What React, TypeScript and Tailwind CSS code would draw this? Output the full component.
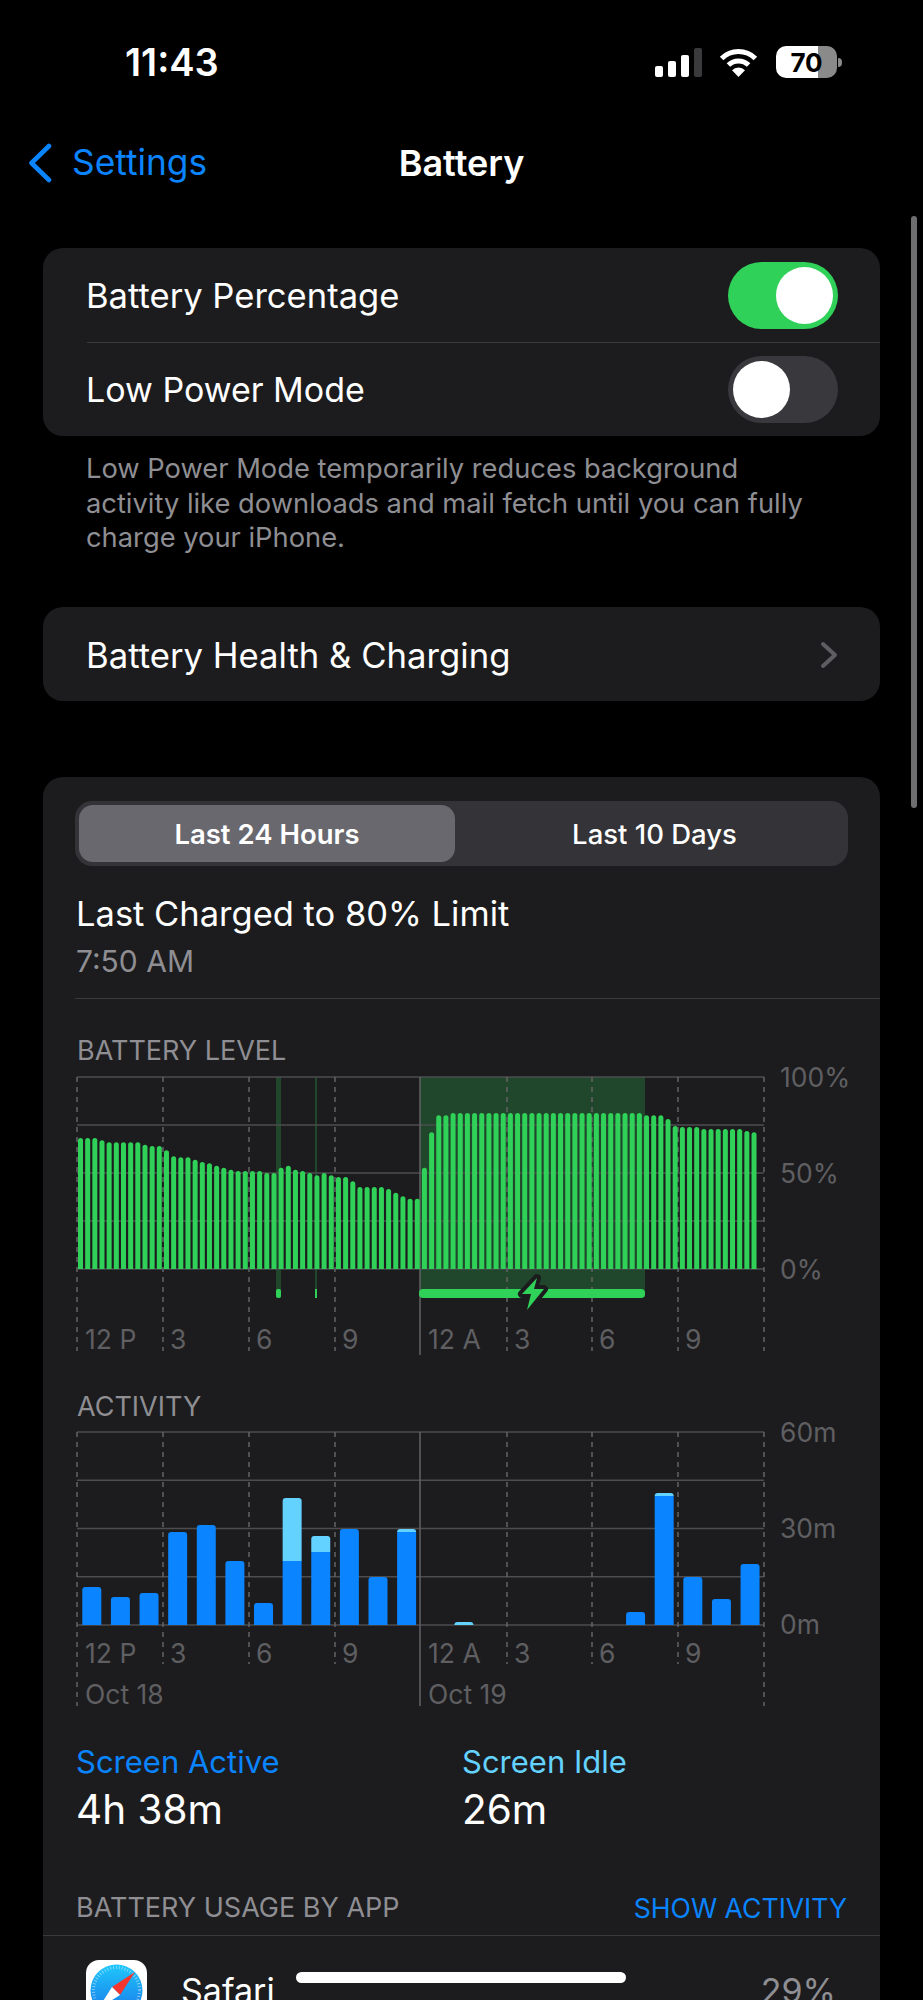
import React from "react";

const GREEN = "#30d158";
const BLUE = "#0a84ff";
const CYAN = "#64d2ff";

// x positions of the 3-hour lines, relative to the card's left edge
const HOUR_X = [34, 120, 206, 292, 377, 464, 549, 635, 721];
const MIDNIGHT_X = 377;
const HOUR_LABELS: [string, number][] = [
  ["12 P", 42],
  ["3", 127],
  ["6", 213],
  ["9", 299],
  ["12 A", 385],
  ["3", 471],
  ["6", 556],
  ["9", 642],
];

// battery bar heights in px, sampled every 15 minutes
const BATTERY_TOPS = [
  325, 325, 325, 332, 338, 338, 338, 338, 338, 345, 349, 349,
  362, 380, 383, 383, 390, 397, 401, 408, 414, 420, 424, 424,
  424, 424, 430, 430, 414, 408, 420, 424, 430, 437, 430, 437,
  442, 442, 455, 472, 472, 472, 472, 478, 489, 500, 507, 507,
  414, 308, 257, 257,
  ...Array(27).fill(250),
  257, 257, 257, 268, 289, 292, 292, 292, 298, 298, 298, 298, 298, 298, 304, 308,
];
const batteryLevels: number[] = BATTERY_TOPS.map((t) => (718 - t) / 3);

interface ActivityBar {
  hour: number;
  active: number;
  idle: number;
}

const activity: ActivityBar[] = [
  { hour: 0, active: 38, idle: 0 },
  { hour: 1, active: 28, idle: 0 },
  { hour: 2, active: 32, idle: 0 },
  { hour: 3, active: 93, idle: 0 },
  { hour: 4, active: 100, idle: 0 },
  { hour: 5, active: 64, idle: 0 },
  { hour: 6, active: 22, idle: 0 },
  { hour: 7, active: 64, idle: 63 },
  { hour: 8, active: 73, idle: 16 },
  { hour: 9, active: 96, idle: 0 },
  { hour: 10, active: 48, idle: 0 },
  { hour: 11, active: 93, idle: 3 },
  { hour: 13, active: 0, idle: 3 },
  { hour: 19, active: 13, idle: 0 },
  { hour: 20, active: 129, idle: 3 },
  { hour: 21, active: 48, idle: 0 },
  { hour: 22, active: 26, idle: 0 },
  { hour: 23, active: 61, idle: 0 },
];

function topRounded(x: number, y: number, w: number, h: number, r: number) {
  const rr = Math.min(r, h);
  return `M${x} ${y + h}V${y + rr}Q${x} ${y} ${x + rr} ${y}H${x + w - rr}Q${x + w} ${y} ${x + w} ${y + rr}V${y + h}Z`;
}

function Toggle({ on }: { on: boolean }) {
  return (
    <div className={`flex h-[67px] w-[110px] items-center rounded-full p-[5px] ${on ? "justify-end bg-[#30d158]" : "justify-start bg-[#39393d]"}`}>
      <div className="size-[57px] rounded-full bg-white" />
    </div>
  );
}

function StatusBar() {
  return (
    <div className="flex h-[124px] items-center justify-between pl-[125px] pr-[81px]">
      <span className="text-[38px] font-semibold text-white">11:43</span>
      <div className="flex items-center">
        <div className="flex h-[29px] items-end gap-[5px]">
          <div className="h-[11px] w-[8px] rounded-[2px] bg-white" />
          <div className="h-[16px] w-[8px] rounded-[2px] bg-white" />
          <div className="h-[22px] w-[8px] rounded-[2px] bg-white" />
          <div className="h-[29px] w-[8px] rounded-[2px] bg-[#3a3a3c]" />
        </div>
        <svg width="39" height="29" viewBox="0 0 39 29" className="ml-[17px]">
          <path d="M2.6 10.5A24 24 0 0 1 36.4 10.5" fill="none" stroke="#fff" strokeWidth="5" />
          <path d="M9.4 17A14.5 14.5 0 0 1 29.6 17" fill="none" stroke="#fff" strokeWidth="5" />
          <path d="M19.5 29L13 22.3A9 9 0 0 1 26 22.3Z" fill="#fff" />
        </svg>
        <div className="ml-[18px] flex h-[32px] w-[61px] items-center justify-center rounded-[10px] bg-[linear-gradient(90deg,#fff_69%,#8a8a8a_69%)] text-[26px] font-bold text-black">
          70
        </div>
        <div className="ml-[1px] h-[9px] w-[4px] rounded-r-full bg-[#8a8a8a]" />
      </div>
    </div>
  );
}

function NavBar() {
  return (
    <div className="relative flex h-[78px] items-center pl-[28px]">
      <svg width="24" height="40" viewBox="0 0 24 40">
        <path d="M21 3L3.5 20L21 37" fill="none" stroke={BLUE} strokeWidth="4.6" strokeLinecap="round" strokeLinejoin="round" />
      </svg>
      <span className="ml-[20px] text-[35.3px] text-[#0a84ff]">Settings</span>
      <span className="absolute left-0 right-0 text-center text-[36px] font-semibold text-white">Battery</span>
    </div>
  );
}

function BatteryChart() {
  const top = 10;
  const base = 202;
  return (
    <svg width="837" height="300" className="block overflow-visible">
      <rect x={MIDNIGHT_X} y={top} width="225" height="220" fill="#20472b" />
      <rect x="233" y={top} width="5" height="220" fill="#20472b" />
      <rect x="272" y={top} width="2" height="220" fill="#20472b" />
      {[0, 1, 2, 3, 4].map((i) => (
        <line key={i} x1="34" x2="721" y1={top + i * 48} y2={top + i * 48} stroke="#4d4d50" strokeWidth="1.5" />
      ))}
      {HOUR_X.map((x) =>
        x === MIDNIGHT_X ? (
          <line key={x} x1={x} x2={x} y1={top} y2="288" stroke="#626265" strokeWidth="1.5" />
        ) : (
          <line key={x} x1={x} x2={x} y1={top} y2="284" stroke="#636366" strokeWidth="1.5" strokeDasharray="5 5" />
        ),
      )}
      {batteryLevels.map((h, i) => (
        <path key={i} d={topRounded(35 + i * 7.165, base - h, 5, h, 2.5)} fill={GREEN} />
      ))}
      <rect x="233" y="222" width="5" height="9" rx="2" fill={GREEN} />
      <rect x="272" y="222" width="2" height="9" fill={GREEN} />
      <rect x="376" y="222" width="226" height="9" rx="4" fill={GREEN} />
      <path d="M494 211L479 227H488L484 243L501 222H491Z" fill={GREEN} stroke="#1c1c1e" strokeWidth="8" strokeLinejoin="round" paintOrder="stroke" />
      {HOUR_LABELS.map(([label, x]) => (
        <text key={x} x={x} y="282" fontSize="26.5" fill="#5f5f62">{label}</text>
      ))}
      <text x="737" y="20" fontSize="26.5" fill="#5f5f62">100%</text>
      <text x="737" y="116" fontSize="26.5" fill="#5f5f62">50%</text>
      <text x="737" y="212" fontSize="26.5" fill="#5f5f62">0%</text>
    </svg>
  );
}

function ActivityChart() {
  const top = 10;
  const base = 203;
  return (
    <svg width="837" height="290" className="block overflow-visible">
      {[0, 1, 2, 3, 4].map((i) => (
        <line key={i} x1="34" x2="721" y1={top + i * 48.25} y2={top + i * 48.25} stroke="#4d4d50" strokeWidth="1.5" />
      ))}
      {HOUR_X.map((x) => {
        if (x === MIDNIGHT_X) return <line key={x} x1={x} x2={x} y1={top} y2="284" stroke="#626265" strokeWidth="1.5" />;
        const long = x === 34 || x === 721;
        return <line key={x} x1={x} x2={x} y1={top} y2={long ? 284 : 242} stroke="#636366" strokeWidth="1.5" strokeDasharray="5 5" />;
      })}
      {activity.map((b) => {
        const x = 39.3 + b.hour * 28.62;
        return (
          <g key={b.hour}>
            {b.idle > 0 && <path d={topRounded(x, base - b.active - b.idle, 19, b.idle, 3)} fill={CYAN} />}
            {b.active > 0 && (
              <path
                d={b.idle > 0 ? `M${x} ${base}V${base - b.active}H${x + 19}V${base}Z` : topRounded(x, base - b.active, 19, b.active, 3)}
                fill={BLUE}
              />
            )}
          </g>
        );
      })}
      {HOUR_LABELS.map(([label, x]) => (
        <text key={x} x={x} y="241" fontSize="26.5" fill="#5f5f62">{label}</text>
      ))}
      <text x="42" y="282" fontSize="26.5" fill="#5f5f62">Oct 18</text>
      <text x="385" y="282" fontSize="26.5" fill="#5f5f62">Oct 19</text>
      <text x="737" y="20" fontSize="26.5" fill="#5f5f62">60m</text>
      <text x="737" y="116" fontSize="26.5" fill="#5f5f62">30m</text>
      <text x="737" y="212" fontSize="26.5" fill="#5f5f62">0m</text>
    </svg>
  );
}

function SafariIcon() {
  return (
    <svg width="61" height="61" viewBox="0 0 61 61" className="shrink-0">
      <defs>
        <linearGradient id="safari" x1="0" y1="0" x2="0" y2="1">
          <stop offset="0" stopColor="#1fc8fb" />
          <stop offset="1" stopColor="#1a74e8" />
        </linearGradient>
      </defs>
      <rect width="61" height="61" rx="13" fill="#fff" />
      <circle cx="30.5" cy="30.5" r="26" fill="url(#safari)" />
      <circle cx="30.5" cy="30.5" r="23" fill="none" stroke="#fff" strokeOpacity="0.6" strokeWidth="3" strokeDasharray="0.7 2.2" />
      <path d="M49 12L26 27L34 35Z" fill="#f5352e" />
      <path d="M12 49L26 27L34 35Z" fill="#fff" />
    </svg>
  );
}

export default function App() {
  return (
    <div className="relative h-[2000px] w-[923px] overflow-hidden bg-black [font-family:Inter,sans-serif]">
      <StatusBar />
      <NavBar />

      <div className="mx-[43px] mt-[46px] rounded-[20px] bg-[#1c1c1e]">
        <div className="flex h-[94px] items-center justify-between pl-[43px] pr-[42px] pt-[1px]">
          <span className="text-[34.6px] text-white">Battery Percentage</span>
          <Toggle on />
        </div>
        <div className="ml-[44px] h-px bg-[#3a3a3c]" />
        <div className="flex h-[93px] items-center justify-between pl-[43px] pr-[42px]">
          <span className="text-[34px] text-white">Low Power Mode</span>
          <Toggle on={false} />
        </div>
      </div>

      <p className="ml-[86px] mt-[16px] w-[735px] text-[27.3px] leading-[34.5px] text-[#8e8e93]">
        Low Power Mode temporarily reduces background activity like downloads and mail fetch until you can fully charge your iPhone.
      </p>

      <div className="mx-[43px] mt-[51px] flex h-[94px] items-center justify-between rounded-[20px] bg-[#1c1c1e] pl-[43px] pr-[42px] pt-[3px]">
        <span className="text-[34.7px] text-white">Battery Health &amp; Charging</span>
        <svg width="18" height="28" viewBox="0 0 18 28">
          <path d="M3 3L15 14L3 25" fill="none" stroke="#5e5e62" strokeWidth="4" strokeLinecap="round" strokeLinejoin="round" />
        </svg>
      </div>

      <div className="mx-[43px] mt-[76px] rounded-[20px] bg-[#1c1c1e] pt-[24px]">
        <div className="mx-[32px] flex h-[65px] rounded-[17px] bg-[#333338] p-[4px]">
          <div className="flex w-[376px] items-center justify-center rounded-[14px] bg-[#68686e] pt-[3px] text-[27.5px] font-semibold text-white">Last 24 Hours</div>
          <div className="flex flex-1 items-center justify-center pl-[10px] pt-[3px] text-[27.5px] font-medium text-white">Last 10 Days</div>
        </div>

        <div className="ml-[33px] mt-[26px] text-[34.5px] leading-[44px] text-white">Last Charged to 80% Limit</div>
        <div className="ml-[33px] mt-[5px] text-[30px] leading-[40px] text-[#8e8e93]">7:50 AM</div>
        <div className="ml-[32px] mt-[17px] h-px bg-[#3a3a3c]" />

        <div className="ml-[34px] mt-[36px] text-[27px] leading-[32px] text-[#8e8e93]">BATTERY LEVEL</div>
        <BatteryChart />

        <div className="ml-[34px] mt-[24px] text-[27px] leading-[31px] text-[#8e8e93]">ACTIVITY</div>
        <ActivityChart />

        <div className="mt-[30px] flex pl-[33px]">
          <div className="w-[386px]">
            <div className="text-[31px] leading-[40px] text-[#0a84ff]">Screen Active</div>
            <div className="mt-[6px] text-[40.5px] leading-[44px] text-white">4h 38m</div>
          </div>
          <div>
            <div className="text-[31px] leading-[40px] text-[#64d2ff]">Screen Idle</div>
            <div className="mt-[6px] text-[40.5px] leading-[44px] text-white">26m</div>
          </div>
        </div>

        <div className="mt-[59px] flex items-center justify-between pl-[33px] pr-[33px] text-[27px] leading-[34px]">
          <span className="text-[#8e8e93]">BATTERY USAGE BY APP</span>
          <span className="text-[26.6px] text-[#0a84ff]">SHOW ACTIVITY</span>
        </div>
        <div className="mt-[10px] h-px bg-[#3a3a3c]" />

        <div className="flex items-center pl-[43px] pr-[44px] pt-[24px]">
          <SafariIcon />
          <span className="ml-[34px] flex-1 text-[34px] text-white">Safari</span>
          <span className="text-[34px] text-[#8e8e93]">29%</span>
        </div>
      </div>

      <div className="absolute left-[296px] top-[1972px] h-[11px] w-[330px] rounded-full bg-white" />
      <div className="absolute left-[911px] top-[216px] h-[592px] w-[6px] rounded-full bg-[#6e6e70]" />
    </div>
  );
}
